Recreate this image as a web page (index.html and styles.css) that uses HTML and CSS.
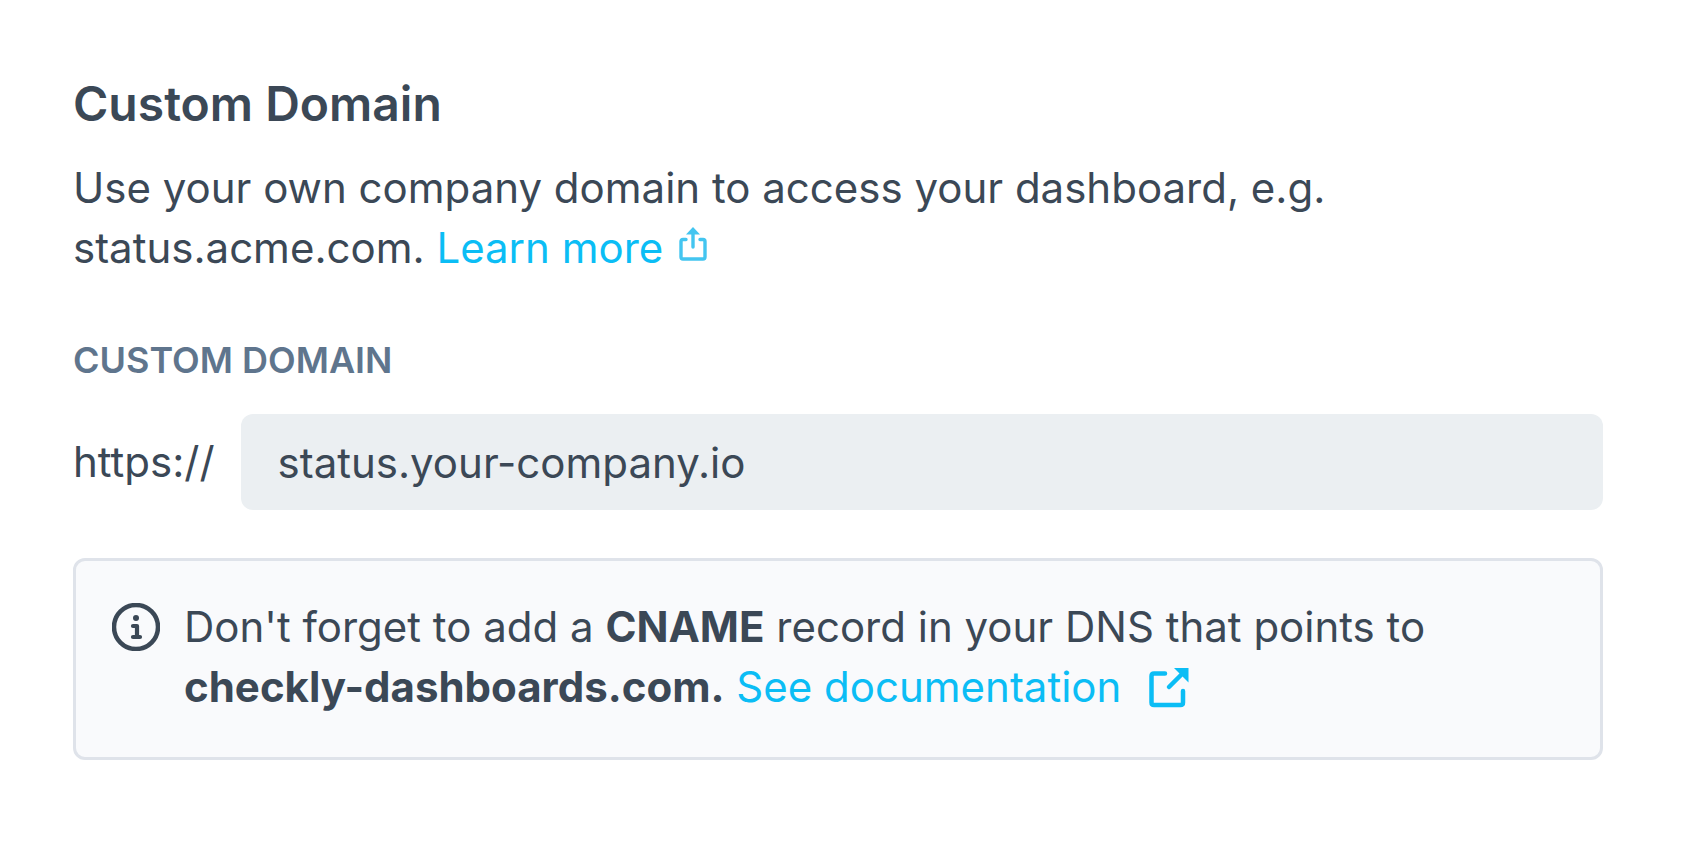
FILE: index.html
```html
<!DOCTYPE html>
<html lang="en">
<head>
<meta charset="utf-8">
<title>Custom Domain</title>
<link rel="stylesheet" href="styles.css">
</head>
<body>
<main class="settings">
  <h1 class="title">Custom Domain</h1>
  <p class="intro">Use your own company domain to access your dashboard, e.g. status.acme.com. <a class="link" href="#learn">Learn more<svg class="share-icon" viewBox="0 0 28 34" aria-hidden="true"><path d="M7 12.500H4Q2 12.500 2 14.500V30Q2 32 4 32H24Q26 32 26 30V14.500Q26 12.500 24 12.500H21M14 20V6" fill="none" stroke="currentColor" stroke-width="3.400" stroke-linecap="round"/><path d="M14 0l7 7.500H7z" fill="currentColor"/></svg></a></p>
  <label class="label" for="domain">CUSTOM DOMAIN</label>
  <div class="field">
    <span class="prefix">https://</span>
    <input class="input" id="domain" type="text" value="status.your-company.io">
  </div>
  <section class="notice">
    <svg class="info-icon" viewBox="0 0 48 48" aria-hidden="true"><circle cx="24" cy="24" r="22" fill="none" stroke="currentColor" stroke-width="4.500"/><circle cx="24" cy="15" r="3" fill="currentColor"/><path d="M21 23h4v11M21 34h7" fill="none" stroke="currentColor" stroke-width="4.200" stroke-linecap="round" stroke-linejoin="round"/></svg>
    <p class="notice-text">Don't forget to add a <strong>CNAME</strong> record in your DNS that points to <strong>checkly-dashboards.com.</strong> <a class="link" href="#docs">See documentation<svg class="external-icon" viewBox="0 0 40 40" aria-hidden="true"><path d="M16 5.500H5Q2.500 5.500 2.500 8V34.500Q2.500 37 5 37H31.500Q34 37 34 34.500V23M20 19L32 7" fill="none" stroke="currentColor" stroke-width="4.500" stroke-linecap="round"/><path d="M25 0H39.500V14.500z" fill="currentColor"/></svg></a></p>
  </section>
</main>
</body>
</html>
```
FILE: styles.css
```css
* { box-sizing: border-box; }
body { margin: 0; background: #fff; color: #3b4856; font-family: Inter, "Liberation Sans", sans-serif; font-size: 42px; line-height: 60px; }
.settings { padding: 74px 83px 82px 73px; }
.title { margin: 0; font-size: 48px; font-weight: 600; }
.intro { margin: 24px 0 0; max-width: 1300px; }
.link { color: #0bbdf5; text-decoration: none; }
.share-icon { width: 28px; height: 34px; margin-left: 16px; vertical-align: 2px; color: #43c5f0; }
.label { display: block; margin-top: 52px; color: #5f758d; font-size: 36px; font-weight: 600; }
.field { display: flex; align-items: center; gap: 26px; margin-top: 24px; }
.input { flex: 1; min-width: 0; height: 96px; padding: 0 37px; border: 0; border-radius: 12px; background: #ebeff2; color: inherit; font: inherit; }
.notice { display: flex; gap: 24px; margin-top: 48px; padding: 36px 36px 40px; border: 3px solid #dfe3ea; border-radius: 12px; background: #f9fafc; }
.info-icon { flex: none; width: 48px; height: 48px; margin-top: 6px; }
.notice-text { margin: 0; }
.notice-text strong { font-weight: 700; }
.external-icon { width: 40px; height: 40px; margin-left: 28px; vertical-align: -6px; }
```
